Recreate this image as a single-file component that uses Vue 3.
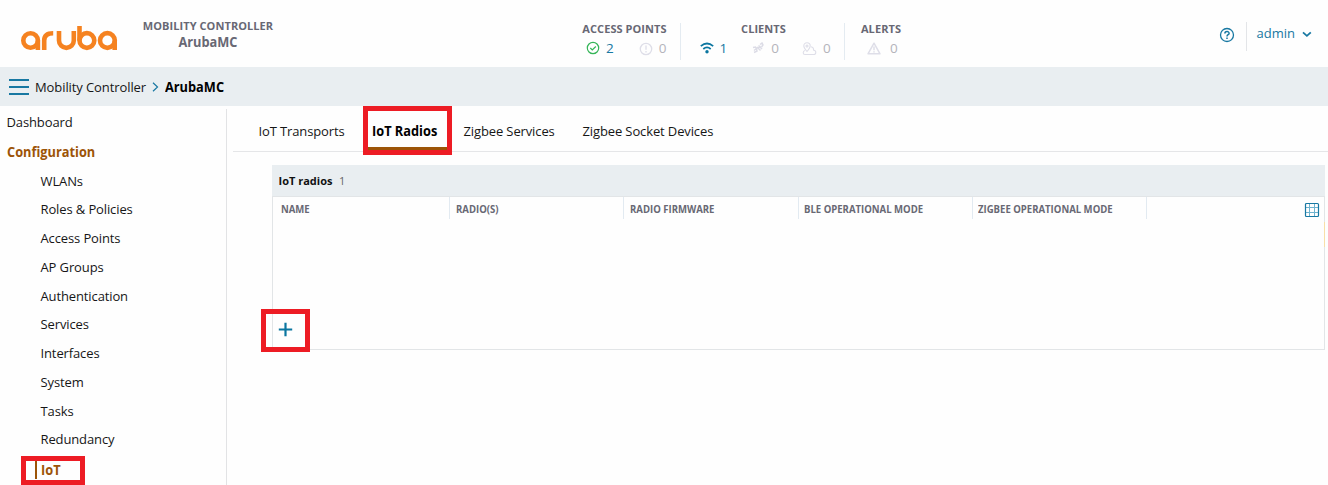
<script setup>
const tabs = [
  { label: 'IoT Transports', width: 113 },
  { label: 'IoT Radios', width: 92, active: true },
  { label: 'Zigbee Services', width: 119 },
  { label: 'Zigbee Socket Devices', width: 150 },
]
const items = ['WLANs', 'Roles & Policies', 'Access Points', 'AP Groups', 'Authentication', 'Services', 'Interfaces', 'System', 'Tasks', 'Redundancy']
const columns = ['Name', 'Radio(s)', 'Radio firmware', 'BLE operational mode', 'Zigbee operational mode']
</script>

<template>
  <div class="page">
    <header class="header">
      <svg class="logo" viewBox="20 25 98 26" fill="none" stroke="#f58220" stroke-width="4.6">
        <circle cx="30.6" cy="40.5" r="7.3" />
        <path d="M37.9 40.5V50" />
        <path d="M44.2 50v-9.5c0-4.600 3-7.300 9-7.300" />
        <path d="M59 31v9.500a7.400 7.400 0 0 0 14.800 0V31" />
        <path d="M79.500 26v14.500" />
        <circle cx="86.900" cy="40.500" r="7.400" />
        <circle cx="107.400" cy="40.500" r="7.400" />
        <path d="M114.700 40.500V50" />
      </svg>
      <div class="device">
        <div class="cap">MOBILITY CONTROLLER</div>
        <div class="device-name">ArubaMC</div>
      </div>
      <section class="stat aps">
        <div class="cap">ACCESS POINTS</div>
        <div class="vals">
          <svg width="14" height="14" viewBox="0 0 14 14" fill="none" stroke="#35b558" stroke-width="1.200"><circle cx="7" cy="7" r="5.700" /><path d="M4.300 7l2 2 3.500-3.500" /></svg>
          <b class="on up">2</b>
          <svg class="low" width="14" height="14" viewBox="0 0 14 14" fill="none" stroke="#dedee8" stroke-width="1.300"><circle cx="7" cy="7" r="5.700" /><path d="M7 3.500v4.200M7 9v1.500" /></svg>
          <b>0</b>
        </div>
      </section>
      <section class="stat clients">
        <div class="cap">CLIENTS</div>
        <div class="vals">
          <svg width="14" height="14" viewBox="0 0 14 14" fill="none" stroke="#0b76a0" stroke-width="1.700"><path d="M.8 5.200Q7-.2 13.200 5.200M3.300 8Q7 4.700 10.700 8" /><circle cx="7" cy="10.800" r="1.700" fill="#0b76a0" stroke="none" /></svg>
          <b class="on wifi">1</b>
          <svg width="12" height="12" viewBox="0 0 12 12" fill="none" stroke="#dcdce6" stroke-width="1.500"><path d="M1 5.500l2.500-.5 1 1.500L2 8.500M2 10.500l3-1.500-.5-2M5 5l3.500 3.500M6.500 3.500L10 7M6 6.500L8.500 4M8 2.500l2-1.500 1 2-1.500 2" /></svg>
          <b class="wired">0</b>
          <svg class="low" width="15" height="14" viewBox="0 0 15 14" fill="none" stroke="#dedee8" stroke-width="1.100"><path d="M3 8.500C.6 9 .6 12.500 3 12.500h8.500c3 0 3-4.200.2-4.200 0-2-1-3.300-2.700-3.500M5 9.500C2.500 6.500 1.800 5.500 1.800 4a3.200 3.200 0 0 1 6.400 0C8.200 5.500 7.500 6.500 5 9.500z" /><circle cx="5" cy="4" r="1" /></svg>
          <b class="remote">0</b>
        </div>
      </section>
      <section class="stat alerts">
        <div class="cap">ALERTS</div>
        <div class="vals">
          <svg width="14" height="13" viewBox="0 0 14 13" fill="none" stroke="#dedee8" stroke-width="1.500" stroke-linejoin="round"><path d="M7 1.200l6 10.600H1zM7 4.500v3.800M7 9.300v1.200" /></svg>
          <b>0</b>
        </div>
      </section>
      <div class="help">
        <svg width="16" height="16" viewBox="0 0 16 16" fill="none" stroke="#1878a2" stroke-width="1.300"><circle cx="8" cy="8" r="6.500" /><path stroke-width="1.500" d="M5.900 6.600c0-2.800 4.300-2.700 4.200-.2 0 1.400-2.100 1.300-2.100 3M8 10.400v1.500" /></svg>
      </div>
      <div class="user">
        <span class="username">admin</span>
        <svg width="10" height="7" viewBox="0 0 10 7" fill="none" stroke="#1878a2" stroke-width="1.800"><path d="M1 1.300l3.900 3.600L8.800 1.300" /></svg>
      </div>
    </header>

    <nav class="crumbs">
      <div class="menu"><i /><i /><i /></div>
      <span class="parent">Mobility Controller</span>
      <svg width="7" height="10" viewBox="0 0 7 10" fill="none" stroke="#1878a2" stroke-width="1.200"><path d="M1 .8l4.500 4.200L1 9.200" /></svg>
      <strong class="narrow">ArubaMC</strong>
    </nav>

    <div class="body">
      <aside class="side">
        <a class="dash">Dashboard</a>
        <a class="config"><span class="narrow">Configuration</span></a>
        <a v-for="i in items" :key="i" class="item">{{ i }}</a>
        <div class="iot-mark"><div class="iot"><span class="narrow">IoT</span></div></div>
      </aside>
      <main class="main">
        <div class="tabs">
          <div v-for="t in tabs" :key="t.label" class="tab" :class="{ active: t.active }" :style="{ width: t.width + 'px' }">
            <span :class="{ narrow: t.active }">{{ t.label }}</span>
          </div>
        </div>
        <section class="panel">
          <div class="title"><strong>IoT radios</strong><span>1</span></div>
          <div class="table">
            <div class="cols">
              <div v-for="(c, n) in columns" :key="c" class="col" :class="'c' + n"><span class="col-label">{{ c }}</span></div>
              <svg class="grid" width="16" height="16" viewBox="0 0 16 16" fill="none"><path stroke="#6fb3cf" d="M5.500 2v12M10.500 2v12M2 5.500h12M2 10.500h12" /><rect x="1.500" y="1.500" width="13" height="13" rx="1" stroke="#1878a2" stroke-width="1.200" /></svg>
            </div>
            <i class="scroll" />
            <div class="add">
              <svg width="15" height="15" viewBox="0 0 15 15" stroke="#0b76a0" stroke-width="2.200"><path d="M7.500.8v13.400M.8 7.500h13.400" /></svg>
            </div>
          </div>
        </section>
      </main>
    </div>
  </div>
</template>

<style>
body { margin: 0; background: #fefefe; }
</style>
<style scoped>
* { box-sizing: border-box; }
.page { width: 1328px; height: 485px; overflow: hidden; background: #fefefe; font-family: "Open Sans", "Noto Sans", sans-serif; font-size: 13px; letter-spacing: -0.12px; color: #161616; white-space: nowrap; }
svg { display: block; flex: none; }
.header { height: 67px; display: flex; }
.logo { width: 98px; height: 26px; margin: 25px 0 0 20px; }
.device { width: 132px; margin: 17px 0 0 24px; text-align: center; color: #686874; }
.cap { font-size: 11px; line-height: 18px; font-weight: 700; color: #686874; letter-spacing: 0.07px; }
.device-name { font-size: 14px; transform: scaleX(0.913); letter-spacing: 0; font-weight: 700; line-height: 14px; }
.narrow { display: inline-block; font-size: 14px; letter-spacing: 0; transform: scaleX(0.913); transform-origin: 0 50%; }
.stat { height: 37px; margin-top: 23px; text-align: center; border-right: 1px solid #e4ebf1; }
.stat .cap { margin-top: -3px; }
.vals { display: flex; align-items: center; height: 20px; }
.vals b { font-weight: 400; font-size: 13.500px; color: #b4b4bb; margin-left: 6px; letter-spacing: 0; }
.vals .on { color: #1878a2; }
.low { position: relative; top: 1px; }
.aps { width: 113px; margin-left: 294px; }
.aps .cap { padding-left: 1px; }
.aps .vals { padding-left: 18px; }
.vals .up { margin-right: 25px; }
.clients { width: 164px; }
.clients .cap { padding-left: 2px; }
.clients .vals { padding-left: 18.500px; }
.vals .wifi { margin-right: 25px; }
.vals .wired { margin-left: 7px; margin-right: 23px; }
.vals .remote { margin-left: 6px; }
.alerts { width: 72px; margin-right: 1px; border: 0; }
.alerts .vals { padding-left: 22px; }
.alerts .vals b { margin-left: 9px; }
.help { width: 28px; height: 29px; margin: 22px 0 0 301px; border-right: 1px solid #e3e5e8; padding-top: 5px; }
.user { display: flex; align-items: center; height: 20px; margin: 24px 0 0 9.500px; color: #1878a2; }
.username { width: 45.500px; margin-top: -2px; letter-spacing: 0; }
.crumbs { height: 39px; background: #e9eef1; display: flex; align-items: center; padding-left: 9px; padding-top: 1px; }
.menu { width: 20px; height: 16px; display: flex; flex-direction: column; justify-content: space-between; margin-right: 6px; }
.menu i { height: 2px; background: #1878a2; }
.parent { width: 117px; letter-spacing: -0.09px; }
.crumbs strong { margin-left: 5.500px; margin-top: -1px; color: #000; }
.body { display: flex; height: 379px; }
.side { width: 227px; height: 376px; margin-top: 3px; border-right: 1px solid #e2e3e5; display: flex; flex-direction: column; }
.side a { flex: none; }
.dash { height: 28px; line-height: 27px; padding-left: 6.500px; }
.config { height: 29.600px; line-height: 30px; padding-left: 6.500px; font-weight: 700; color: #9c5407; }
.item { height: 28.750px; line-height: 28px; padding-left: 40.500px; }
.iot-mark { width: 64px; height: 29px; margin: 1.900px 0 0 21px; border: 5px solid #ed1c24; padding: 0 0 0 9px; flex: none; }
.iot { height: 18px; border-left: 2px solid #9c5407; padding-left: 3.500px; line-height: 18px; font-weight: 700; color: #9c5407; }
.main { width: 1095px; margin-left: 6px; }
.tabs { height: 46px; display: flex; padding-left: 25.500px; border-bottom: 1px solid #e5e6e8; }
.tab { line-height: 50px; flex: none; }
.tab.active { position: relative; font-weight: 700; color: #000; }
.tab.active::after { content: ""; position: absolute; box-sizing: border-box; left: -8.500px; top: 0; width: 89px; height: 49px; border: 5px solid #ed1c24; box-shadow: inset 0 -3px #9c5407; }
.panel { margin: 13px 3px 0 39px; }
.title { height: 31px; line-height: 31px; background: #e9eef1; padding-left: 6.500px; font-size: 11px; display: flex; color: #666; letter-spacing: 0; }
.title strong { width: 60.500px; color: #111; }
.table { position: relative; height: 154px; border: 1px solid #e2e5e7; }
.cols { display: flex; height: 22px; line-height: 25px; font-size: 10.500px; letter-spacing: 0; font-weight: 700; color: #686874; text-transform: uppercase; }
.col { width: 174.300px; border-right: 1px solid #e2eaf1; padding-left: 5.500px; }
.col-label { display: inline-block; transform: scaleX(0.91); transform-origin: 0 50%; }
.c0 { width: 177px; padding-left: 7.500px; }
.grid { margin: 5px 0 0 157px; }
.scroll { position: absolute; right: -1px; top: 25px; width: 1px; height: 25px; background: #f8dfa8; }
.add { position: absolute; left: -12px; bottom: -3px; width: 49px; height: 43px; border: 5px solid #ed1c24; padding: 8px 0 0 12px; }
</style>
